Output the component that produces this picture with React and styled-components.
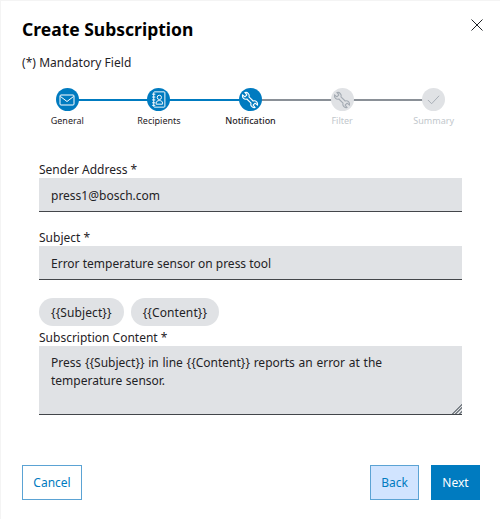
import React from 'react';
import styled, { createGlobalStyle } from 'styled-components';

const GlobalStyle = createGlobalStyle`
  html, body {
    margin: 0;
    padding: 0;
    background: #fff;
    font-family: "Noto Sans", "Liberation Sans", sans-serif;
    color: #1f2226;
  }
  * { box-sizing: border-box; }
`;

const Dialog = styled.div`
  width: 500px;
  height: 519px;
  padding: 17px 20px 19px 22px;
  display: flex;
  flex-direction: column;
  box-shadow: inset 1px 1px 0 #f4f4f4;
`;

const Header = styled.header`
  display: flex;
  justify-content: space-between;
  align-items: flex-start;
`;

const Title = styled.h1`
  margin: 0;
  font-size: 17.5px;
  line-height: 24px;
  font-weight: 700;
  color: #000;
`;

const CloseButton = styled.button`
  border: 0;
  background: none;
  padding: 0;
  margin: 2px -3px 0 0;
  width: 12px;
  height: 12px;
  display: flex;
  color: #1f2226;
`;

const Mandatory = styled.p`
  margin: 13px 0 0;
  font-size: 12px;
  line-height: 18px;
  letter-spacing: 0.05px;
  color: #1f2226;
`;

const Stepper = styled.ol`
  list-style: none;
  margin: 16px 0 0 -0.5px;
  padding: 0;
  display: grid;
  grid-template-columns: repeat(5, 91.6px);
`;

const Step = styled.li`
  position: relative;
  display: flex;
  flex-direction: column;
  align-items: center;

  &:not(:last-child)::after {
    content: '';
    position: absolute;
    top: 11px;
    left: 50%;
    width: 100%;
    height: 2px;
    background: ${({ $lineDone }) => ($lineDone ? '#007bc0' : '#8a9097')};
  }
`;

const StepCircle = styled.span`
  position: relative;
  z-index: 1;
  width: 23px;
  height: 23px;
  border-radius: 50%;
  display: flex;
  align-items: center;
  justify-content: center;
  background: ${({ $disabled }) => ($disabled ? '#e0e2e5' : '#007bc0')};
  color: ${({ $disabled }) => ($disabled ? '#a4abb3' : '#fff')};
`;

const StepLabel = styled.span`
  margin-top: 3px;
  font-size: 9px;
  line-height: 14px;
  font-weight: ${({ $active }) => ($active ? 500 : 400)};
  color: ${({ $disabled }) => ($disabled ? '#c1c7cc' : '#1f2226')};
`;

const Form = styled.form`
  margin: 33px 18px 0 17px;
  display: flex;
  flex-direction: column;
`;

const Label = styled.label`
  display: block;
  font-size: 12px;
  line-height: 18px;
  margin-bottom: -1px;
  color: #1f2226;
`;

const TextInput = styled.input`
  display: block;
  width: 100%;
  height: 34px;
  padding: 2px 12px 0;
  border: 0;
  border-bottom: 1px solid #43464a;
  border-radius: 0;
  outline: none;
  background: #e0e2e5;
  font: 400 12px "Noto Sans", sans-serif;
  color: #1f2226;
  margin-bottom: 17px;
`;

const Chips = styled.div`
  display: flex;
  gap: 7px;
  margin: 1px 0 3px;
`;

const Chip = styled.button`
  height: 28px;
  padding: 0 12px;
  border: 0;
  border-radius: 14px;
  background: #e0e2e5;
  font: 400 12px "Noto Sans", sans-serif;
  letter-spacing: 0.1px;
  color: #1f2226;
`;

const TextAreaWrap = styled.div`
  position: relative;

  &::after {
    content: '';
    position: absolute;
    right: 0;
    bottom: 1px;
    width: 11px;
    height: 11px;
    background: repeating-linear-gradient(135deg, transparent 0 1px, #7d8389 1px 2.4px);
    clip-path: polygon(100% 0, 100% 100%, 0 100%);
    pointer-events: none;
  }
`;

const TextArea = styled.textarea`
  display: block;
  width: 100%;
  height: 69px;
  padding: 8px 12px;
  border: 0;
  border-bottom: 1px solid #43464a;
  border-radius: 0;
  outline: none;
  background: #e0e2e5;
  font: 400 12px/18px "Noto Sans", sans-serif;
  word-spacing: 0.6px;
  color: #1f2226;
  resize: none;
`;

const Footer = styled.footer`
  margin-top: auto;
  display: flex;
  align-items: center;
  gap: 12px;
`;

const Button = styled.button`
  height: 35px;
  width: ${({ $width }) => $width}px;
  border: 1px solid ${({ $variant }) => ($variant === 'primary' ? '#007bc0' : '#5ba3d4')};
  background: ${({ $variant }) =>
    $variant === 'primary' ? '#007bc0' : $variant === 'tinted' ? '#d1e4ff' : '#fff'};
  color: ${({ $variant }) => ($variant === 'primary' ? '#fff' : '#007bc0')};
  font: 400 12px "Noto Sans", sans-serif;
  padding: 0;

  &:first-child {
    margin-right: auto;
  }
`;

const MailIcon = () => (
  <svg width="16" height="16" viewBox="0 0 16 16" fill="none" stroke="currentColor" strokeWidth="1">
    <rect x="1" y="3" width="14" height="10" rx="1" />
    <path d="M1.5 4.5 8 9.5l6.5-5" />
  </svg>
);

const BookIcon = () => (
  <svg width="17" height="17" viewBox="0 0 16 16" fill="none" stroke="currentColor" strokeWidth="0.9">
    <rect x="3.5" y="0.8" width="10.5" height="14.4" rx="0.8" />
    <path d="M2 3h3M2 5.7h3M2 8.4h3M2 11.1h3M2 13.5h3" />
    <circle cx="8.8" cy="6" r="2" />
    <path d="M5.8 12.4v-1c0-1.6 1.2-2.4 3-2.4s3 .8 3 2.4v1z" />
  </svg>
);

const WrenchIcon = () => (
  <svg width="18" height="18" viewBox="0 0 16 16" fill="none" stroke="currentColor" strokeWidth="1">
    <path d="M1.4 3.6 3.5 5.2 5.2 3.5 3.6 1.4a2.9 2.9 0 0 1 3.5 3.8l3.7 3.7a2.9 2.9 0 0 1 3.8 3.5L12.5 10.8l-1.7 1.7 1.6 2.1a2.9 2.9 0 0 1-3.5-3.8L5.2 7.1a2.9 2.9 0 0 1-3.8-3.5z" />
  </svg>
);

const CheckIcon = () => (
  <svg width="15" height="15" viewBox="0 0 16 16" fill="none" stroke="currentColor" strokeWidth="1">
    <path d="M2 8.5 6 12.5 14 4" />
  </svg>
);

const steps = [
  { label: 'General', icon: <MailIcon />, lineDone: true },
  { label: 'Recipients', icon: <BookIcon />, lineDone: true },
  { label: 'Notification', icon: <WrenchIcon />, active: true },
  { label: 'Filter', icon: <WrenchIcon />, disabled: true },
  { label: 'Summary', icon: <CheckIcon />, disabled: true },
];

const App = () => {
  return (
    <>
      <GlobalStyle />
      <Dialog>
        <Header>
          <Title>Create Subscription</Title>
          <CloseButton type="button" aria-label="Close">
            <svg width="12" height="12" viewBox="0 0 12 12" fill="none" stroke="currentColor" strokeWidth="1">
              <path d="M0.5 0.5l11 11M11.5 0.5l-11 11" />
            </svg>
          </CloseButton>
        </Header>
        <Mandatory>(*) Mandatory Field</Mandatory>
        <Stepper>
          {steps.map((step) => (
            <Step key={step.label} $lineDone={step.lineDone}>
              <StepCircle $disabled={step.disabled}>{step.icon}</StepCircle>
              <StepLabel $active={step.active} $disabled={step.disabled}>
                {step.label}
              </StepLabel>
            </Step>
          ))}
        </Stepper>
        <Form>
          <Label htmlFor="sender">Sender Address *</Label>
          <TextInput id="sender" defaultValue="press1@bosch.com" />
          <Label htmlFor="subject">Subject *</Label>
          <TextInput id="subject" defaultValue="Error temperature sensor on press tool" />
          <Chips>
            <Chip type="button">{'{{Subject}}'}</Chip>
            <Chip type="button">{'{{Content}}'}</Chip>
          </Chips>
          <Label htmlFor="content">Subscription Content *</Label>
          <TextAreaWrap>
            <TextArea
              id="content"
              defaultValue="Press {{Subject}} in line {{Content}} reports an error at the temperature sensor."
            />
          </TextAreaWrap>
        </Form>
        <Footer>
          <Button type="button" $width={60}>Cancel</Button>
          <Button type="button" $width={49} $variant="tinted">Back</Button>
          <Button type="button" $width={49} $variant="primary">Next</Button>
        </Footer>
      </Dialog>
    </>
  );
};

export default App;
